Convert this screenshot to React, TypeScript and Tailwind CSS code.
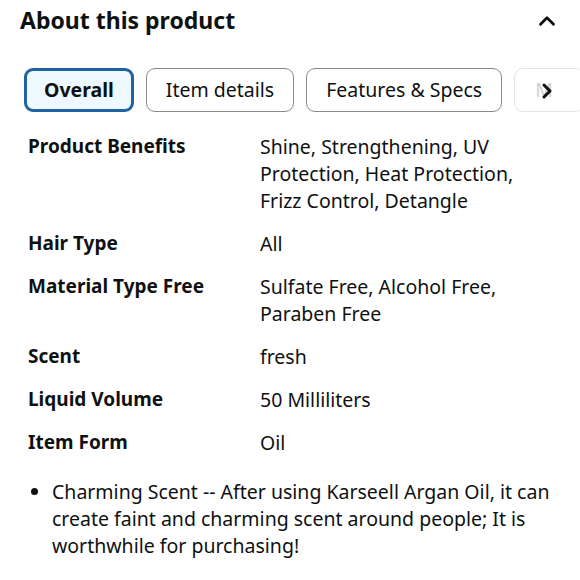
import { ChevronUp, ChevronRight } from "lucide-react";

const rows: { label: string; value: string }[] = [
  { label: "Product Benefits", value: "Shine, Strengthening, UV Protection, Heat Protection, Frizz Control, Detangle" },
  { label: "Hair Type", value: "All" },
  { label: "Material Type Free", value: "Sulfate Free, Alcohol Free, Paraben Free" },
  { label: "Scent", value: "fresh" },
  { label: "Liquid Volume", value: "50 Milliliters" },
  { label: "Item Form", value: "Oil" },
];

const tabs = ["Overall", "Item details", "Features & Specs"];

export default function App() {
  return (
    <div
      className="w-[580px] h-[580px] overflow-hidden bg-white text-[#0f1111]"
      style={{ fontFamily: '"Noto Sans", Arial, sans-serif' }}
    >
      {/* header */}
      <div className="flex items-center justify-between pl-5 pr-5 pt-[3px] h-[38px]">
        <h2 className="text-[23px] font-bold leading-none">About this product</h2>
        <ChevronUp className="w-[26px] h-[26px]" strokeWidth={2.6} />
      </div>

      {/* tabs */}
      <div className="flex gap-3 pl-6 mt-[30px] overflow-hidden">
        {tabs.map((t, i) => (
          <div
            key={t}
            className={
              i === 0
                ? "shrink-0 h-[44px] px-[17px] flex items-center rounded-[9px] border-[3px] border-[#2162a1] bg-[#edf8ff] text-[19.5px] font-bold"
                : "shrink-0 h-[44px] px-[19px] flex items-center rounded-[9px] border border-[#888c8c] text-[19.5px]"
            }
          >
            {t}
          </div>
        ))}
        <div className="relative shrink-0 h-[44px] w-[70px] flex items-center pl-[20px] rounded-[9px] border border-[#e3e6e6] text-[19.5px] text-[#cfcfcf]">
          M
          <ChevronRight className="absolute left-[20px] top-[10px] w-[24px] h-[24px] text-[#0f1111]" strokeWidth={3} />
        </div>
      </div>

      {/* spec table */}
      <div className="mt-[21px] pl-7 pr-4 flex flex-col gap-4">
        {rows.map((r) => (
          <div key={r.label} className="flex leading-[27px]">
            <div className="w-[232px] shrink-0 font-bold text-[19px]">{r.label}</div>
            <div className="w-[272px] text-[19.5px]">{r.value}</div>
          </div>
        ))}
      </div>

      {/* bullets */}
      <ul className="mt-[22px] pl-[52px] pr-3 list-disc text-[19.5px] leading-[27px]">
        <li>
          Charming Scent -- After using Karseell Argan Oil, it can create faint and charming scent around people; It is
          worthwhile for purchasing!
        </li>
      </ul>
    </div>
  );
}
